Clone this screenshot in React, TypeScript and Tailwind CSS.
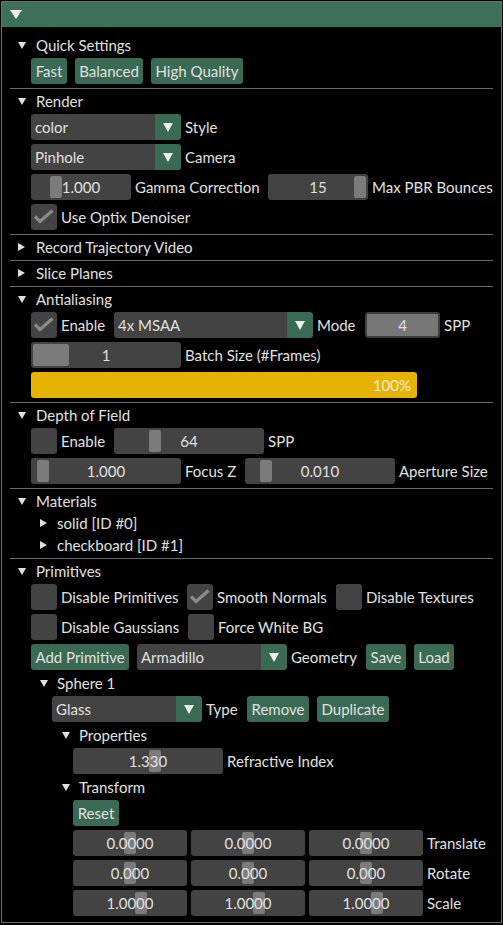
import React from "react";

const TXT = "text-[#e0e0e0]";

function TriDown({ w = 8, h = 7, color = "#e0e0e0" }: { w?: number; h?: number; color?: string }) {
  return (
    <svg width={w} height={h} viewBox={`0 0 ${w} ${h}`} className="shrink-0">
      <path d={`M0 0H${w}L${w / 2} ${h}Z`} fill={color} />
    </svg>
  );
}

function TriRight() {
  return (
    <svg width="7" height="8" viewBox="0 0 7 8" className="shrink-0">
      <path d="M0 0L7 4L0 8Z" fill="#e0e0e0" />
    </svg>
  );
}

function Sep() {
  return <div className="mt-[4px] h-px w-[483px] bg-[#6a6a6a]" />;
}

function Header({ label, open = true }: { label: string; open?: boolean }) {
  return (
    <div className="flex h-[21px] items-center pt-[3px]">
      <div className="ml-[8px] flex w-[18px] items-center">
        {open ? <TriDown w={8} h={7} /> : <TriRight />}
      </div>
      <span>{label}</span>
    </div>
  );
}

function Node({ label, open, indent }: { label: string; open: boolean; indent: number }) {
  return (
    <div className="mt-[4px] flex h-[18px] items-center" style={{ paddingLeft: indent }}>
      <div className="flex w-[17px] items-center">{open ? <TriDown w={8} h={7} /> : <TriRight />}</div>
      <span>{label}</span>
    </div>
  );
}

function Row({ children, indent = 21 }: { children: React.ReactNode; indent?: number }) {
  return (
    <div className="mt-[4px] flex h-[26px] items-center" style={{ paddingLeft: indent }}>
      {children}
    </div>
  );
}

function Btn({ label, w }: { label: string; w: number }) {
  return (
    <div
      className="flex h-[26px] shrink-0 items-center justify-center rounded-[3px] bg-[#3a6a53]"
      style={{ width: w }}
    >
      {label}
    </div>
  );
}

function Combo({ value, w }: { value: string; w: number }) {
  return (
    <div className="flex h-[26px] shrink-0" style={{ width: w }}>
      <div className="flex flex-1 items-center rounded-l-[3px] bg-[#434343] pl-[4px]">{value}</div>
      <div className="flex w-[26px] items-center justify-center rounded-r-[3px] bg-[#3a6a53]">
        <TriDown w={10} h={9} color="#eeeeee" />
      </div>
    </div>
  );
}

function Slider({ value, w, grab, gw = 12 }: { value: string; w: number; grab: number; gw?: number }) {
  return (
    <div className="relative flex h-[26px] shrink-0 items-center justify-center rounded-[3px] bg-[#434343]" style={{ width: w }}>
      <div className="absolute top-[2px] bottom-[2px] rounded-[2px] bg-[#7b7b7b]" style={{ left: grab, width: gw }} />
      <span className="relative">{value}</span>
    </div>
  );
}

function Check({ on }: { on: boolean }) {
  return (
    <div className="flex h-[26px] w-[26px] shrink-0 items-center justify-center rounded-[3px] bg-[#434343]">
      {on && (
        <svg width="26" height="26" viewBox="0 0 26 26">
          <polyline points="4,12.5 9,17.5 21.5,6.5" fill="none" stroke="#8a8a8a" strokeWidth="3.2" />
        </svg>
      )}
    </div>
  );
}

function CheckLabel({ on, label, w }: { on: boolean; label: string; w?: number }) {
  return (
    <div className="flex shrink-0 items-center gap-[4px]" style={w ? { width: w } : undefined}>
      <Check on={on} />
      <span className="whitespace-nowrap">{label}</span>
    </div>
  );
}

function Labeled({ children, label, w }: { children: React.ReactNode; label: string; w?: number }) {
  return (
    <div className="flex shrink-0 items-center gap-[4px]" style={w ? { width: w } : undefined}>
      {children}
      <span className="whitespace-nowrap">{label}</span>
    </div>
  );
}

export default function App() {
  return (
    <div className={`min-h-[925px] bg-black pt-px pl-px font-['Lato',sans-serif] text-[15px] leading-[20px] ${TXT}`}>
      <div className="flex h-[922px] w-[501px] flex-col border border-[#6e6e6e] bg-black">
        <div className="flex h-[25px] shrink-0 items-center bg-[#3c7058] pl-[8px]">
          <TriDown w={12} h={9} color="#f2f2f2" />
        </div>
        <div className="flex flex-col pt-[6px] pl-[8px]">
          <Header label="Quick Settings" />
          <Row>
            <div className="flex gap-[8px]">
              <Btn label="Fast" w={36} />
              <Btn label="Balanced" w={68} />
              <Btn label="High Quality" w={92} />
            </div>
          </Row>
          <Sep />
          <Header label="Render" />
          <Row>
            <Labeled label="Style">
              <Combo value="color" w={150} />
            </Labeled>
          </Row>
          <Row>
            <Labeled label="Camera">
              <Combo value="Pinhole" w={150} />
            </Labeled>
          </Row>
          <Row>
            <Labeled label="Gamma Correction" w={237}>
              <Slider value="1.000" w={100} grab={19} />
            </Labeled>
            <Labeled label="Max PBR Bounces">
              <Slider value="15" w={100} grab={86} />
            </Labeled>
          </Row>
          <Row>
            <CheckLabel on label="Use Optix Denoiser" />
          </Row>
          <Sep />
          <Header label="Record Trajectory Video" open={false} />
          <Sep />
          <Header label="Slice Planes" open={false} />
          <Sep />
          <Header label="Antialiasing" />
          <Row>
            <CheckLabel on label="Enable" w={83} />
            <Labeled label="Mode" w={251}>
              <Combo value="4x MSAA" w={199} />
            </Labeled>
            <Labeled label="SPP">
              <div className="flex h-[26px] w-[75px] items-center justify-center rounded-[3px] border-2 border-[#3e3e3e] bg-[#777777]">
                4
              </div>
            </Labeled>
          </Row>
          <Row>
            <Labeled label="Batch Size (#Frames)">
              <Slider value="1" w={150} grab={2} gw={36} />
            </Labeled>
          </Row>
          <Row>
            <div className="flex h-[26px] w-[386px] items-center justify-end rounded-[3px] bg-[#e6b400] pr-[6px] text-[#f4ecd8]">
              100%
            </div>
          </Row>
          <Sep />
          <Header label="Depth of Field" />
          <Row>
            <CheckLabel on={false} label="Enable" w={83} />
            <Labeled label="SPP">
              <Slider value="64" w={150} grab={35} />
            </Labeled>
          </Row>
          <Row>
            <Labeled label="Focus Z" w={214}>
              <Slider value="1.000" w={150} grab={6} />
            </Labeled>
            <Labeled label="Aperture Size">
              <Slider value="0.010" w={150} grab={15} />
            </Labeled>
          </Row>
          <Sep />
          <Header label="Materials" />
          <Node label="solid [ID #0]" open={false} indent={30} />
          <Node label="checkboard [ID #1]" open={false} indent={30} />
          <Sep />
          <Header label="Primitives" />
          <Row>
            <CheckLabel on={false} label="Disable Primitives" w={156} />
            <CheckLabel on label="Smooth Normals" w={149} />
            <CheckLabel on={false} label="Disable Textures" />
          </Row>
          <Row>
            <CheckLabel on={false} label="Disable Gaussians" w={157} />
            <CheckLabel on={false} label="Force White BG" />
          </Row>
          <Row>
            <div className="w-[106px] shrink-0">
              <Btn label="Add Primitive" w={98} />
            </div>
            <Labeled label="Geometry" w={229}>
              <Combo value="Armadillo" w={150} />
            </Labeled>
            <div className="flex gap-[8px]">
              <Btn label="Save" w={40} />
              <Btn label="Load" w={40} />
            </div>
          </Row>
          <Node label="Sphere 1" open indent={30} />
          <Row indent={42}>
            <Labeled label="Type" w={195}>
              <Combo value="Glass" w={150} />
            </Labeled>
            <div className="flex gap-[8px]">
              <Btn label="Remove" w={62} />
              <Btn label="Duplicate" w={72} />
            </div>
          </Row>
          <Node label="Properties" open indent={52} />
          <Row indent={63}>
            <Labeled label="Refractive Index">
              <Slider value="1.330" w={150} grab={76} />
            </Labeled>
          </Row>
          <Node label="Transform" open indent={52} />
          <Row indent={63}>
            <Btn label="Reset" w={46} />
          </Row>
          {[
            { l: "Translate", v: "0.0000", g: 51 },
            { l: "Rotate", v: "0.000", g: 51 },
            { l: "Scale", v: "1.0000", g: 62 },
          ].map((r) => (
            <Row indent={63} key={r.l}>
              <div className="flex items-center gap-[4px]">
                <Slider value={r.v} w={114} grab={r.g} />
                <Slider value={r.v} w={114} grab={r.g} />
                <Slider value={r.v} w={114} grab={r.g} />
                <span>{r.l}</span>
              </div>
            </Row>
          ))}
        </div>
      </div>
    </div>
  );
}
